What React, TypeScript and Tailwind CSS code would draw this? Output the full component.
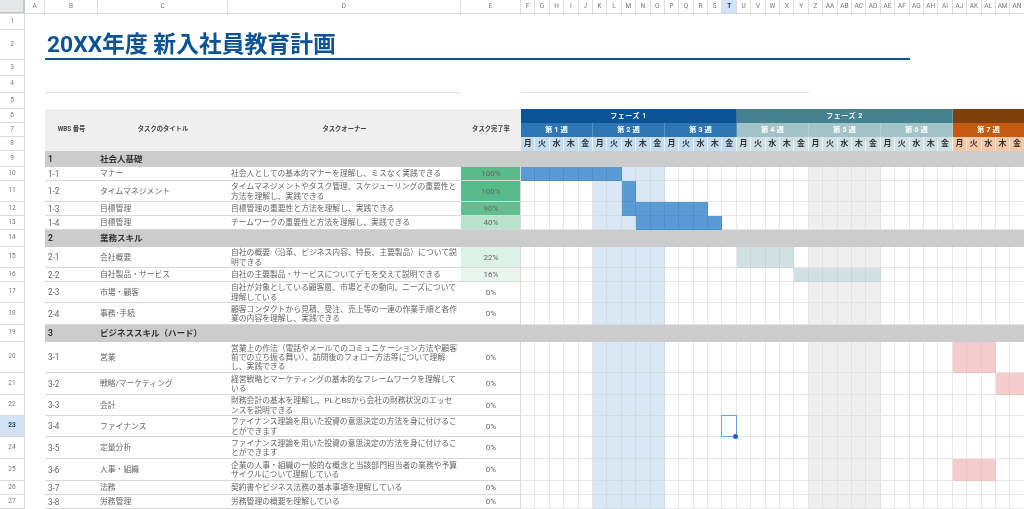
import React from "react";

const GANTT = 35;
const colNames = ["F","G","H","I","J","K","L","M","N","O","P","Q","R","S","T","U","V","W","X","Y","Z","AA","AB","AC","AD","AE","AF","AG","AH","AI","AJ","AK","AL","AM","AN"];
const dayNames = ["月","火","水","木","金"];

type Task = {
  n: number; h: number; id: string; title: string; desc: string; pct: string; pctBg: string;
  from?: number; to?: number; bar?: string;
};
type Group = { n: number; h: number; id: string; title: string; group: true };

const rows: (Task | Group)[] = [
  { n: 9, h: 16, id: "1", title: "社会人基礎", group: true },
  { n: 10, h: 14, id: "1-1", title: "マナー", desc: "社会人としての基本的マナーを理解し、ミスなく実践できる", pct: "100%", pctBg: "bg-[#57bb8a]", from: 0, to: 6, bar: "bg-[#5b9bd5]" },
  { n: 11, h: 21, id: "1-2", title: "タイムマネジメント", desc: "タイムマネジメントやタスク管理、スケジューリングの重要性と\n方法を理解し、実践できる", pct: "100%", pctBg: "bg-[#57bb8a]", from: 7, to: 7, bar: "bg-[#5b9bd5]" },
  { n: 12, h: 14, id: "1-3", title: "目標管理", desc: "目標管理の重要性と方法を理解し、実践できる", pct: "90%", pctBg: "bg-[#63bf90]", from: 7, to: 12, bar: "bg-[#5b9bd5]" },
  { n: 13, h: 14, id: "1-4", title: "目標管理", desc: "チームワークの重要性と方法を理解し、実践できる", pct: "40%", pctBg: "bg-[#b8e3cd]", from: 8, to: 13, bar: "bg-[#5b9bd5]" },
  { n: 14, h: 17, id: "2", title: "業務スキル", group: true },
  { n: 15, h: 21, id: "2-1", title: "会社概要", desc: "自社の概要（沿革、ビジネス内容、特長、主要製品）について説\n明できる", pct: "22%", pctBg: "bg-[#dcf2e7]", from: 15, to: 18, bar: "bg-[#d0e0e3]" },
  { n: 16, h: 14, id: "2-2", title: "自社製品・サービス", desc: "自社の主要製品・サービスについてデモを交えて説明できる", pct: "16%", pctBg: "bg-[#e6f5ee]", from: 19, to: 24, bar: "bg-[#d0e0e3]" },
  { n: 17, h: 21, id: "2-3", title: "市場・顧客", desc: "自社が対象としている顧客層、市場とその動向、ニーズについて\n理解している", pct: "0%", pctBg: "bg-white" },
  { n: 18, h: 22, id: "2-4", title: "事務･手続", desc: "顧客コンタクトから見積、受注、売上等の一連の作業手順と各作\n業の内容を理解し、実践できる", pct: "0%", pctBg: "bg-white" },
  { n: 19, h: 17, id: "3", title: "ビジネススキル（ハード）", group: true },
  { n: 20, h: 31, id: "3-1", title: "営業", desc: "営業上の作法（電話やメールでのコミュニケーション方法や顧客\n前での立ち振る舞い）、訪問後のフォロー方法等について理解\nし、実践できる", pct: "0%", pctBg: "bg-white", from: 30, to: 32, bar: "bg-[#f4cccc]" },
  { n: 21, h: 22, id: "3-2", title: "戦略/マーケティング", desc: "経営戦略とマーケティングの基本的なフレームワークを理解して\nいる", pct: "0%", pctBg: "bg-white", from: 33, to: 34, bar: "bg-[#f4cccc]" },
  { n: 22, h: 21, id: "3-3", title: "会計", desc: "財務会計の基本を理解し、PLとBSから会社の財務状況のエッセ\nンスを説明できる", pct: "0%", pctBg: "bg-white" },
  { n: 23, h: 21, id: "3-4", title: "ファイナンス", desc: "ファイナンス理論を用いた投資の意思決定の方法を身に付けるこ\nとができます", pct: "0%", pctBg: "bg-white" },
  { n: 24, h: 22, id: "3-5", title: "定量分析", desc: "ファイナンス理論を用いた投資の意思決定の方法を身に付けるこ\nとができます", pct: "0%", pctBg: "bg-white" },
  { n: 25, h: 22, id: "3-6", title: "人事・組織", desc: "企業の人事・組織の一般的な概念と当該部門担当者の業務や予算\nサイクルについて理解している", pct: "0%", pctBg: "bg-white", from: 30, to: 32, bar: "bg-[#f4cccc]" },
  { n: 26, h: 14, id: "3-7", title: "法務", desc: "契約書やビジネス法務の基本事項を理解している", pct: "0%", pctBg: "bg-white" },
  { n: 27, h: 14, id: "3-8", title: "労務管理", desc: "労務管理の概要を理解している", pct: "0%", pctBg: "bg-white" },
];

function RowHead({ n, h, active }: { n: number; h: number; active?: boolean }) {
  return (
    <div
      style={{ height: h }}
      className={`w-[25px] shrink-0 flex items-center justify-center border-r border-b border-[#d8dadc] text-[6.5px] ${
        active ? "bg-[#d3e3f5] text-[#1d3f66] font-bold" : "bg-white text-[#777]"
      }`}
    >
      {n}
    </div>
  );
}

function ColHead({ label, w, active }: { label: string; w: string; active?: boolean }) {
  return (
    <div
      className={`${w} shrink-0 flex items-center justify-center border-r border-[#dcdee0] text-[6.5px] ${
        active ? "bg-[#d3e3f5] text-[#1d3f66] font-bold" : "text-[#777]"
      }`}
    >
      {label}
    </div>
  );
}

function BlankRow({ n, h, children }: { n: number; h: number; children?: React.ReactNode }) {
  return (
    <div className="flex shrink-0" style={{ height: h }}>
      <RowHead n={n} h={h} />
      <div className="w-[20px] shrink-0" />
      {children}
    </div>
  );
}

function GanttCells({ task, rowN }: { task: Task; rowN: number }) {
  return (
    <div className="flex shrink-0 border-l border-[#dadada] -ml-px">
      {Array.from({ length: GANTT }).map((_, i) => {
        const inBar = task.from !== undefined && i >= task.from && i <= (task.to as number);
        let bg = "bg-white";
        let line = "border-[#e6e6e6]";
        if (i >= 5 && i <= 9) {
          bg = "bg-[#dae8f6]";
          line = "border-[#cfdbe7]";
        }
        if (i >= 20 && i <= 24) {
          bg = "bg-[#efefef]";
          line = "border-[#e2e2e2]";
        }
        if (inBar) {
          bg = task.bar as string;
          line = task.bar === "bg-[#5b9bd5]" ? "border-[#528ec8]" : task.bar === "bg-[#f4cccc]" ? "border-[#eec4c4]" : "border-[#c6d6d9]";
        }
        const selected = rowN === 23 && i === 14;
        return (
          <div key={i} className={`relative w-[14.4px] shrink-0 border-r border-b ${line} ${bg}`}>
            {selected && (
              <div className="absolute -left-px -top-px -right-px -bottom-px border border-[#6aa5e3] z-10">
                <div className="absolute -right-[2.5px] -bottom-[2.5px] w-[5px] h-[5px] rounded-full bg-[#1a66c0]" />
              </div>
            )}
          </div>
        );
      })}
    </div>
  );
}

function Row({ row }: { row: Task | Group }) {
  if ("group" in row) {
    return (
      <div className="flex shrink-0" style={{ height: row.h }}>
        <RowHead n={row.n} h={row.h} />
        <div className="w-[20px] shrink-0" />
        <div className="flex-1 bg-[#cccccc] flex items-center text-[8.5px] font-bold text-[#333]">
          <div className="w-[53px] shrink-0 pl-[3px]">{row.id}</div>
          <div className="pl-[2px] whitespace-nowrap">{row.title}</div>
        </div>
      </div>
    );
  }
  return (
    <div className="flex shrink-0" style={{ height: row.h }}>
      <RowHead n={row.n} h={row.h} active={row.n === 23} />
      <div className="w-[20px] shrink-0" />
      <div className="flex shrink-0 border-b border-[#d8d8d8] text-[7.8px] text-[#666]">
        <div className="w-[53px] shrink-0 pl-[3px] pt-[1px] flex items-center text-[8.2px]">{row.id}</div>
        <div className="w-[130px] shrink-0 pl-[2px] pt-[1px] flex items-center whitespace-nowrap">{row.title}</div>
        <div className="w-[233px] shrink-0 pl-[3px] pt-[1px] flex items-center whitespace-pre leading-[9.3px]">{row.desc}</div>
        <div className={`w-[60px] shrink-0 pt-[1px] flex items-center justify-center text-[8px] ${row.pctBg}`}>{row.pct}</div>
      </div>
      <GanttCells task={row} rowN={row.n} />
    </div>
  );
}

function Bar({ w, bg, label, size, track }: { w: string; bg: string; label: string; size: string; track: string }) {
  return (
    <div className={`${w} shrink-0 h-full flex items-center justify-center font-bold border-r border-white/20 text-white ${bg} ${size} ${track}`}>
      {label}
    </div>
  );
}

const weeks: [string, string][] = [
  ["第 1 週", "bg-[#2e75b6]"],
  ["第 2 週", "bg-[#2e75b6]"],
  ["第 3 週", "bg-[#2e75b6]"],
  ["第 4 週", "bg-[#a2c4c9]"],
  ["第 5 週", "bg-[#a2c4c9]"],
  ["第 6 週", "bg-[#a2c4c9]"],
  ["第 7 週", "bg-[#c55a11]"],
];

export default function App() {
  return (
    <div className="w-[1024px] h-[509px] overflow-hidden bg-white flex flex-col font-['Roboto','Noto_Sans_CJK_JP',sans-serif] blur-[0.35px]">
      <div className="flex h-[14px] shrink-0 border-b border-[#d8dadc] bg-white">
        <div className="w-[25px] shrink-0 bg-[#e6e7e8] border-r-2 border-b border-[#c4c6c8]" />
        <ColHead label="A" w="w-[20px]" />
        <ColHead label="B" w="w-[53px]" />
        <ColHead label="C" w="w-[130px]" />
        <ColHead label="D" w="w-[233px]" />
        <ColHead label="E" w="w-[60px]" />
        {colNames.map((c) => (
          <ColHead key={c} label={c} w="w-[14.4px]" active={c === "T"} />
        ))}
      </div>

      <BlankRow n={1} h={16} />
      <BlankRow n={2} h={30}>
        <div className="w-[865px] shrink-0 border-b-2 border-[#0b5394] flex items-center pt-[2px] pl-[2px] text-[22.8px] font-bold text-[#0b5394] leading-none whitespace-nowrap">
          20XX年度 新入社員教育計画
        </div>
      </BlankRow>
      <BlankRow n={3} h={16} />
      <BlankRow n={4} h={17}>
        <div className="w-[416px] shrink-0 border-b border-[#e2e2e2]" />
        <div className="w-[60px] shrink-0" />
        <div className="w-[288px] shrink-0 border-b border-[#e2e2e2]" />
      </BlankRow>
      <BlankRow n={5} h={16} />

      <div className="flex shrink-0 h-[42px]">
        <div className="flex flex-col shrink-0">
          <RowHead n={6} h={14} />
          <RowHead n={7} h={14} />
          <RowHead n={8} h={14} />
        </div>
        <div className="w-[20px] shrink-0" />
        <div className="flex shrink-0 bg-[#efefef] text-[6.3px] font-bold text-[#444] items-center text-center">
          <div className="w-[53px] shrink-0">WBS 番号</div>
          <div className="w-[130px] shrink-0">タスクのタイトル</div>
          <div className="w-[233px] shrink-0">タスクオーナー</div>
          <div className="w-[60px] shrink-0">タスク完了率</div>
        </div>
        <div className="flex flex-col shrink-0">
          <div className="flex h-[14px]">
            <Bar w="w-[216px]" bg="bg-[#0b5394]" label="フェーズ 1" size="text-[7px]" track="tracking-[0.5px]" />
            <Bar w="w-[216px]" bg="bg-[#45818e]" label="フェーズ 2" size="text-[7px]" track="tracking-[0.5px]" />
            <Bar w="w-[72px]" bg="bg-[#7f3f0a]" label="" size="text-[7px]" track="tracking-[0.5px]" />
          </div>
          <div className="flex h-[14px]">
            {weeks.map(([label, bg]) => (
              <Bar key={label} w="w-[72px]" bg={bg} label={label} size="text-[7.4px]" track="tracking-[0.1px]" />
            ))}
          </div>
          <div className="flex h-[14px]">
            {Array.from({ length: GANTT }).map((_, i) => (
              <div
                key={i}
                className={`w-[14.4px] shrink-0 flex items-center justify-center border-r border-white/60 text-[8px] font-bold text-[#333] ${
                  i < 15 ? "bg-[#c3dcf0]" : i < 30 ? "bg-[#cfe0e3]" : "bg-[#f6c8a8]"
                }`}
              >
                {dayNames[i % 5]}
              </div>
            ))}
          </div>
        </div>
      </div>

      {rows.map((r) => (
        <Row key={r.n} row={r} />
      ))}
    </div>
  );
}
